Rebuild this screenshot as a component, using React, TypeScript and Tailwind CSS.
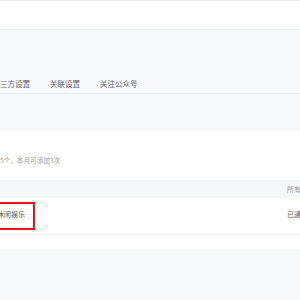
const tabs = ["第三方设置", "关联设置", "关注公众号"];

const App = () => {
  return (
    <div
      className="w-[300px] h-[300px] overflow-hidden bg-[#f7f8fa]"
      style={{ fontFamily: '"Noto Sans CJK SC", "Noto Sans", sans-serif' }}
    >
      <div className="h-[30px] bg-white border-t border-b border-[#eceef1]" />

      <div className="pt-[48px]">
        <div className="h-[16px] border-b border-[#eceef1]">
          <div className="flex gap-[20px] ml-[-7.5px] text-[7.5px] leading-[12px] text-[#666]">
            {tabs.map((t) => (
              <span key={t} className="whitespace-nowrap">
                {t}
              </span>
            ))}
          </div>
        </div>
        <div className="h-[36px]" />
      </div>

      <div className="bg-white pt-[26px] pb-[14px]">
        <p className="text-[6.6px] leading-[8px] text-[#999] whitespace-nowrap">5个，本月可添加3次</p>

        <div className="mt-[16px]">
          <div className="flex items-center h-[18px] bg-[#f5f6f8] text-[7px] text-[#999]">
            <div className="w-[287px] shrink-0" />
            <div className="whitespace-nowrap">所有状态</div>
          </div>
          <div className="relative flex items-center h-[37px] pb-[3px] border-b border-[#f0f1f3] text-[7px] text-[#555]">
            <div className="w-[287px] shrink-0">
              <span className="ml-[-3px] whitespace-nowrap">休闲娱乐</span>
            </div>
            <div className="whitespace-nowrap text-[#666]">已通过</div>
            <div className="absolute left-[-10px] top-[4px] w-[45px] h-[28px] border-2 border-[#e8101a]" />
          </div>
        </div>
      </div>
    </div>
  );
};

export default App;
